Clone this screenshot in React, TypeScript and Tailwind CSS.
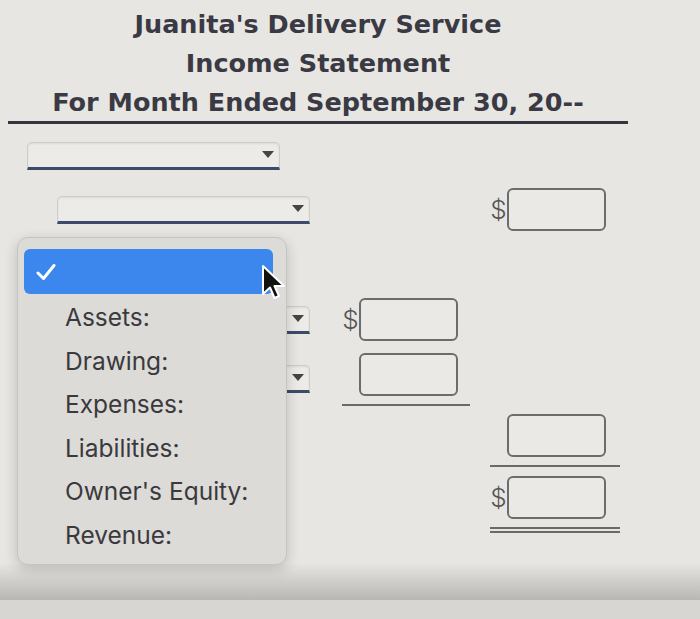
import React from "react"

const titleFont = { fontFamily: '"DejaVu Sans", Verdana, sans-serif' }
const uiFont = { fontFamily: 'Inter, "Liberation Sans", Arial, sans-serif' }

function Select({ className = "" }: { className?: string }) {
  return (
    <div
      className={`relative h-[28px] w-[253px] rounded-t-[5px] border border-[#cfcdca] border-b-[3px] border-b-[#3d4a69] bg-[#ecebe8] shadow-[inset_0_1px_2px_rgba(0,0,0,0.08)] ${className}`}
    >
      <span className="absolute right-[5px] top-[8px] h-0 w-0 border-x-[6px] border-t-[7px] border-x-transparent border-t-[#454545]" />
    </div>
  )
}

function Box() {
  return <div className="h-[43px] w-[99px] rounded-[6px] border-2 border-[#6c6c6c] bg-[#ebe9e6]" />
}

function Dollar() {
  return (
    <span className="w-[17px] text-center text-[26px] font-light leading-none text-[#555]" style={uiFont}>
      $
    </span>
  )
}

const options = ["Assets:", "Drawing:", "Expenses:", "Liabilities:", "Owner's Equity:", "Revenue:"]

export default function App() {
  return (
    <div className="relative flex h-[619px] w-[700px] flex-col overflow-hidden bg-[#e8e6e2]">
      {/* Header */}
      <div className="ml-[8px] w-[620px] pt-[5px] text-center text-[25.5px] font-bold leading-[39px] text-[#3a3a44]" style={titleFont}>
        <div>Juanita's Delivery Service</div>
        <div>Income Statement</div>
        <div>For Month Ended September 30, 20--</div>
      </div>
      <div className="ml-[8px] mt-[-1px] h-[3px] w-[620px] bg-[#35353d]" />

      {/* Row A */}
      <div className="mt-[18px] flex h-[28px] items-start">
        <Select className="ml-[27px]" />
      </div>

      {/* Row B */}
      <div className="mt-[18px] flex h-[43px] items-center">
        <div className="w-[490px]">
          <Select className="ml-[57px]" />
        </div>
        <div className="flex w-[130px] items-center">
          <Dollar />
          <Box />
        </div>
      </div>

      {/* Row C */}
      <div className="mt-[67px] flex h-[43px] items-center">
        <div className="w-[342px]">
          <Select className="ml-[57px]" />
        </div>
        <div className="flex w-[128px] items-center">
          <Dollar />
          <Box />
        </div>
      </div>

      {/* Row D */}
      <div className="mt-[12px] flex items-start">
        <div className="flex h-[43px] w-[342px] items-center">
          <Select className="ml-[57px] mt-[8px]" />
        </div>
        <div className="w-[128px]">
          <div className="flex items-center">
            <span className="w-[17px]" />
            <Box />
          </div>
          <div className="mt-[8px] h-[2px] bg-[#6a6a6a]" />
        </div>
      </div>

      {/* Row E */}
      <div className="mt-[8px] flex">
        <div className="ml-[490px] w-[130px]">
          <div className="flex items-center">
            <span className="w-[17px]" />
            <Box />
          </div>
          <div className="mt-[8px] h-[2px] bg-[#6a6a6a]" />
        </div>
      </div>

      {/* Row F */}
      <div className="mt-[9px] flex">
        <div className="ml-[490px] w-[130px]">
          <div className="flex items-center">
            <Dollar />
            <Box />
          </div>
          <div className="mt-[8px] h-[2px] bg-[#6a6a6a]" />
          <div className="mt-[2px] h-[2px] bg-[#6a6a6a]" />
        </div>
      </div>

      {/* Bottom edge of the screen */}
      <div className="flex-1" />
      <div className="h-[36px] bg-gradient-to-b from-[#e6e4e0] to-[#b9b7b3]" />
      <div className="h-[19px] bg-[#d8d6d2]" />

      {/* Open dropdown menu */}
      <div
        className="absolute left-[17px] top-[237px] h-[328px] w-[270px] rounded-[11px] border border-[#c6c4c0] bg-[#dddbd7] shadow-[0_4px_14px_rgba(0,0,0,0.18)]"
        style={uiFont}
      >
        <div className="ml-[6px] mr-[13px] mt-[11px] flex h-[45px] items-center rounded-[6px] bg-[#3b87ee] pl-[12px]">
          <svg width="20" height="18" viewBox="0 0 20 18" fill="none">
            <path d="M2 10 L7.5 15.5 L18 2.5" stroke="white" strokeWidth="3" strokeLinecap="round" strokeLinejoin="round" />
          </svg>
        </div>
        <div className="mt-[2px]">
          {options.map((o) => (
            <div key={o} className="flex h-[43.5px] items-center pl-[47px] text-[24.5px] text-[#3a3a3e]">
              {o}
            </div>
          ))}
        </div>
      </div>

      {/* Mouse pointer */}
      <svg className="absolute left-[261px] top-[264px]" width="28" height="38" viewBox="0 0 28 38">
        <path d="M2 2 L2 30 L9 23.5 L13.5 34 L18 32 L13.5 22 L23 22 Z" fill="#111" stroke="white" strokeWidth="2" strokeLinejoin="round" />
      </svg>
    </div>
  )
}
